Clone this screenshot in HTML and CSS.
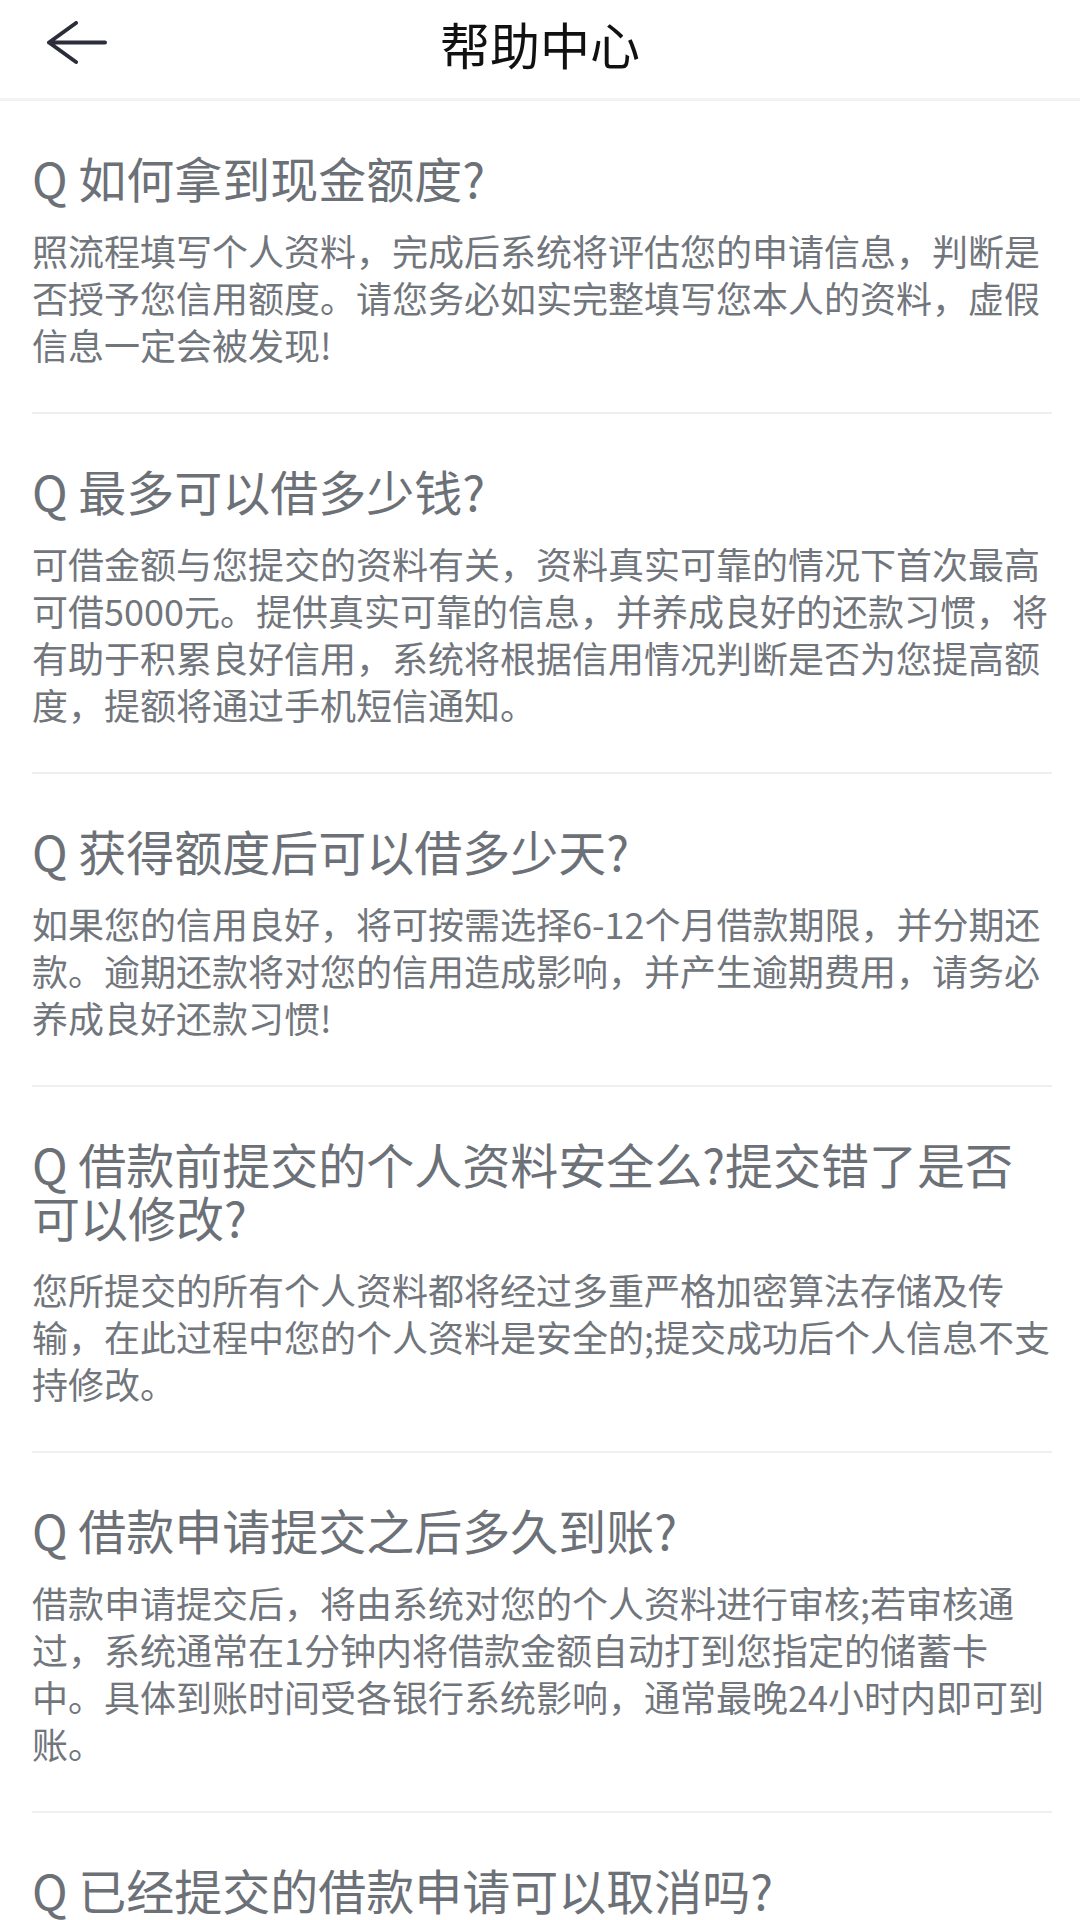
FILE: index.html
```html
<!DOCTYPE html>
<html lang="zh-CN">
<head>
    <meta charset="UTF-8">
    <title>帮助中心</title>
    <link rel="stylesheet" href="styles.css">
</head>
<body>
    <div class="page">
        <div class="top_bar">
            <div class="back_btn">
                <svg width="62" height="44" viewBox="0 0 62 44">
                    <path d="M59 21.5H3 M30 2 L3 21.5 L30 41" fill="none" stroke="#2a2d3a" stroke-width="4" stroke-linecap="round" stroke-linejoin="round"/>
                </svg>
            </div>
            <div class="top_title">帮助中心</div>
        </div>
        <div class="faq_list">
            <div class="faq_item">
                <div class="faq_q">Q 如何拿到现金额度?</div>
                <div class="faq_a">照流程填写个人资料，完成后系统将评估您的申请信息，判断是否授予您信用额度。请您务必如实完整填写您本人的资料，虚假信息一定会被发现!</div>
            </div>
            <div class="faq_item">
                <div class="faq_q">Q 最多可以借多少钱?</div>
                <div class="faq_a">可借金额与您提交的资料有关，资料真实可靠的情况下首次最高可借5000元。提供真实可靠的信息，并养成良好的还款习惯，将有助于积累良好信用，系统将根据信用情况判断是否为您提高额度，提额将通过手机短信通知。</div>
            </div>
            <div class="faq_item">
                <div class="faq_q">Q 获得额度后可以借多少天?</div>
                <div class="faq_a">如果您的信用良好，将可按需选择6-12个月借款期限，并分期还款。逾期还款将对您的信用造成影响，并产生逾期费用，请务必养成良好还款习惯!</div>
            </div>
            <div class="faq_item">
                <div class="faq_q">Q 借款前提交的个人资料安全么?提交错了是否可以修改?</div>
                <div class="faq_a">您所提交的所有个人资料都将经过多重严格加密算法存储及传输，在此过程中您的个人资料是安全的;提交成功后个人信息不支持修改。</div>
            </div>
            <div class="faq_item">
                <div class="faq_q">Q 借款申请提交之后多久到账?</div>
                <div class="faq_a">借款申请提交后，将由系统对您的个人资料进行审核;若审核通过，系统通常在1分钟内将借款金额自动打到您指定的储蓄卡中。具体到账时间受各银行系统影响，通常最晚24小时内即可到账。</div>
            </div>
            <div class="faq_item">
                <div class="faq_q">Q 已经提交的借款申请可以取消吗?</div>
            </div>
        </div>
    </div>
</body>
</html>
```

FILE: styles.css
```css
* {
    margin: 0;
    padding: 0;
    box-sizing: border-box;
}
body {
    background: #fff;
    font-family: "Noto Sans CJK SC", "Noto Sans", sans-serif;
    overflow: hidden;
}
.page {
    width: 1080px;
    height: 1920px;
    overflow: hidden;
}
/* 顶部栏 */
.top_bar {
    display: flex;
    position: relative;
    align-items: center;
    justify-content: center;
    height: 101px;
    border-bottom: 3px solid #f3f3f3;
}
.back_btn {
    position: absolute;
    left: 46px;
    top: 21px;
    width: 62px;
    height: 44px;
}
.top_title {
    margin-top: -12px;
    font-size: 50px;
    color: #111;
}
/* 问答列表 */
.faq_list {
    padding: 0 28px 0 32px;
}
.faq_item {
    padding: 50px 0 44px;
    border-bottom: 2px solid #efefef;
}
.faq_q {
    font-size: 48px;
    line-height: 53px;
    color: #6c7077;
}
.faq_a {
    margin-top: 23px;
    font-size: 36px;
    line-height: 47px;
    color: #71757c;
    line-break: strict;
}
```
